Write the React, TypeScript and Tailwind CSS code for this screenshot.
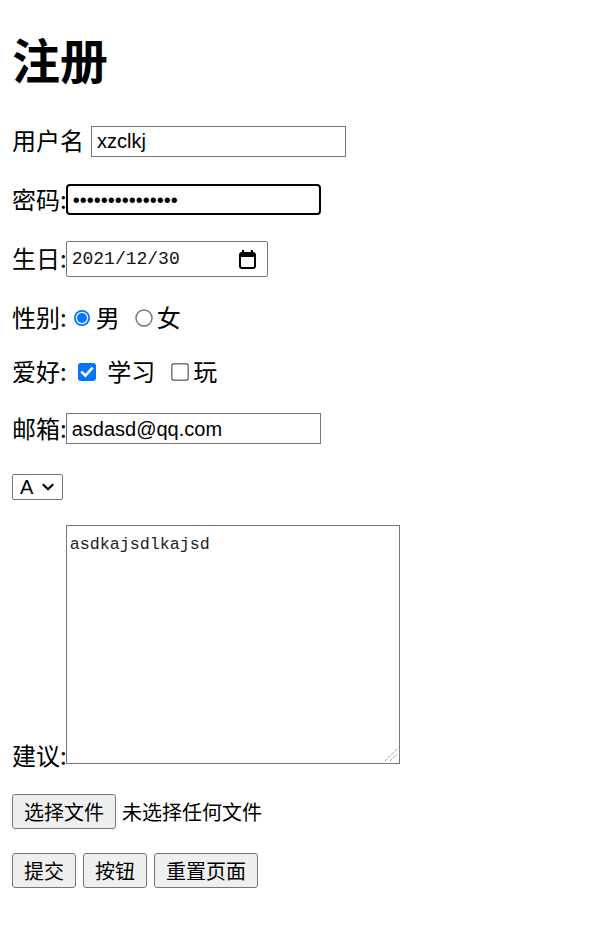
import React from "react";

const latin = "font-['Liberation_Sans','Noto_Sans_CJK_SC',sans-serif]";
const mono = "font-['Liberation_Mono','Noto_Sans_CJK_SC',monospace]";

function Radio({ checked }: { checked: boolean }) {
  return (
    <svg width="18" height="18" viewBox="0 0 18 18" className="shrink-0">
      {checked ? (
        <>
          <circle cx="9" cy="9" r="8" fill="#0075ff" />
          <circle cx="9" cy="9" r="6.2" fill="#ffffff" />
          <circle cx="9" cy="9" r="5" fill="#0075ff" />
        </>
      ) : (
        <circle cx="9" cy="9" r="8" fill="#ffffff" stroke="#767676" strokeWidth="1.5" />
      )}
    </svg>
  );
}

function Check({ checked }: { checked: boolean }) {
  return (
    <svg width="18" height="18" viewBox="0 0 18 18" className="shrink-0">
      {checked ? (
        <>
          <rect x="0" y="0" width="18" height="18" rx="3" fill="#0075ff" />
          <path d="M4.2 9.4 L7.4 12.6 L13.8 5.6" fill="none" stroke="#ffffff" strokeWidth="2.6" strokeLinecap="square" strokeLinejoin="miter" />
        </>
      ) : (
        <rect x="0.75" y="0.75" width="16.5" height="16.5" rx="2.5" fill="#ffffff" stroke="#767676" strokeWidth="1.5" />
      )}
    </svg>
  );
}

function CalendarIcon() {
  return (
    <svg width="17" height="19" viewBox="0 0 17 19" className="shrink-0">
      <rect x="3" y="0" width="2.2" height="4" fill="#000" />
      <rect x="11.8" y="0" width="2.2" height="4" fill="#000" />
      <rect x="1" y="3" width="15" height="15" rx="2" fill="none" stroke="#000" strokeWidth="2" />
      <rect x="1" y="3" width="15" height="4" fill="#000" />
    </svg>
  );
}

function Label({ children, colon }: { children: React.ReactNode; colon?: boolean }) {
  return (
    <span
      className={`mb-[2px] shrink-0 whitespace-nowrap text-[24px] leading-[24px] ${colon ? "mr-[-1px]" : ""}`}
    >
      {children}
    </span>
  );
}

function Btn({ children, w }: { children: React.ReactNode; w: string }) {
  return (
    <div
      className={`flex h-[35px] ${w} shrink-0 items-center justify-center rounded-[3px] border border-[#767676] bg-[#efefef] text-[20px] leading-[20px] text-black`}
    >
      {children}
    </div>
  );
}

export default function App() {
  return (
    <div className="min-h-[927px] bg-white px-[12px] pb-[30px] font-['Noto_Sans_CJK_SC',sans-serif] text-black">
      <h1 className="pt-[34px] h-[82px] text-[48px] leading-[48px] font-bold">注册</h1>

      {/* 用户名 */}
      <div className="mt-[39px] flex h-[40px] items-center">
        <Label>用户名</Label>
        <div className={`ml-[7px] flex h-[31px] w-[255px] items-center border border-[#767676] pl-[5px] text-[20px] ${latin}`}>
          xzclkj
        </div>
      </div>

      {/* 密码 */}
      <div className="mt-[18.5px] flex h-[40px] items-center">
        <Label colon>密码:</Label>
        <div className={`flex h-[31px] w-[255px] items-center rounded-[4px] border-2 border-black pl-[5px] text-[20px] ${latin}`}>
          •••••••••••••••
        </div>
      </div>

      {/* 生日 */}
      <div className="mt-[19.5px] flex h-[40px] items-center">
        <Label colon>生日:</Label>
        <div className="flex h-[36px] w-[202px] items-center justify-between rounded-[2px] border border-[#767676] pl-[5px] pr-[11px]">
          <span className={`${mono} text-[18px] leading-[20px] text-[#111]`}>2021/12/30</span>
          <CalendarIcon />
        </div>
      </div>

      {/* 性别 */}
      <div className="mt-[19px] flex h-[40px] items-center">
        <Label colon>性别:</Label>
        <span className="ml-[7px]"><Radio checked /></span>
        <span className="ml-[5px] flex"><Label>男</Label></span>
        <span className="ml-[15px]"><Radio checked={false} /></span>
        <span className="ml-[4px] flex"><Label>女</Label></span>
      </div>

      {/* 爱好 */}
      <div className="mt-[14px] flex h-[40px] items-center">
        <Label colon>爱好:</Label>
        <span className="ml-[12.5px]"><Check checked /></span>
        <span className="ml-[11px] flex"><Label>学习</Label></span>
        <span className="ml-[16px]"><Check checked={false} /></span>
        <span className="ml-[4px] flex"><Label>玩</Label></span>
      </div>

      {/* 邮箱 */}
      <div className="mt-[16.5px] flex h-[40px] items-center">
        <Label colon>邮箱:</Label>
        <div className={`flex h-[31px] w-[255px] items-center border border-[#767676] pl-[5px] text-[20px] ${latin}`}>
          asdasd@qq.com
        </div>
      </div>

      {/* select */}
      <div className="mt-[18.5px] flex h-[40px] items-center">
        <div className={`flex h-[26px] w-[51px] items-center rounded-[2px] border border-[#767676] pl-[7px] text-[20px] ${latin}`}>
          <span className="leading-[20px]">A</span>
          <svg width="12" height="8" viewBox="0 0 12 8" className="ml-[9px]">
            <path d="M0.8 1.2 L6 6.2 L11.2 1.2" fill="none" stroke="#000" strokeWidth="2.2" />
          </svg>
        </div>
      </div>

      {/* 建议 */}
      <div className="mt-[18px] flex items-end">
        <span className="mb-[-3px] mr-[-1px] shrink-0 whitespace-nowrap text-[24px] leading-[24px]">建议:</span>
        <div className="relative h-[239px] w-[334px] shrink-0 border border-[#767676] pl-[3px] pt-[4px]">
          <span className={`${mono} text-[16.7px] leading-[20px] text-[#222]`}>asdkajsdlkajsd</span>
          <svg width="14" height="14" viewBox="0 0 14 14" className="absolute bottom-[1px] right-[1px]">
            <path d="M1 13 L13 1" stroke="#777" strokeWidth="1" strokeDasharray="1 1" />
            <path d="M6 13 L13 6" stroke="#777" strokeWidth="1" strokeDasharray="1 1" />
          </svg>
        </div>
      </div>

      {/* 文件 */}
      <div className="mt-[27.5px] flex h-[40px] items-center">
        <Btn w="w-[104px]">选择文件</Btn>
        <span className="ml-[6px] text-[20px] leading-[20px]">未选择任何文件</span>
      </div>

      {/* buttons */}
      <div className="mt-[19px] flex h-[40px] items-center gap-[7px]">
        <Btn w="w-[64px]">提交</Btn>
        <Btn w="w-[64px]">按钮</Btn>
        <Btn w="w-[104px]">重置页面</Btn>
      </div>
    </div>
  );
}
